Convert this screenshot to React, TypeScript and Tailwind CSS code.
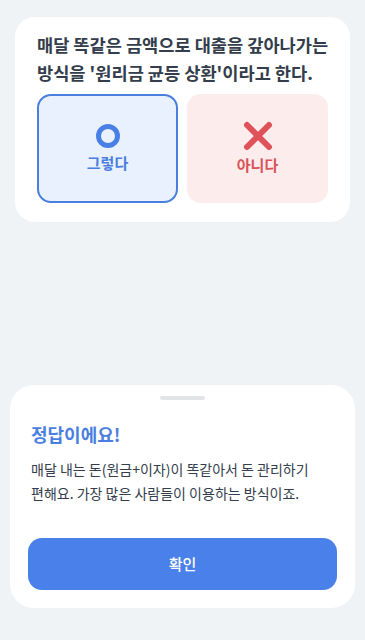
export default function App() {
  return (
    <div
      className="min-h-[640px] bg-[#f0f3f5] flex flex-col justify-between pt-[17px] pb-[32px]"
      style={{ fontFamily: '"Noto Sans CJK KR", "Noto Sans", sans-serif' }}
    >
      {/* Question card */}
      <div className="mx-[15px] bg-white rounded-[20px] px-[22px] pt-[14px] pb-[19px]">
        <p className="text-[17.6px] font-bold leading-[28px] text-[#333d4b] whitespace-nowrap">
          매달 똑같은 금액으로 대출을 갚아나가는
          <br />
          방식을 '원리금 균등 상환'이라고 한다.
        </p>
        <div className="mt-[7px] grid grid-cols-2 gap-[9px]">
          <button className="h-[109px] rounded-[14px] border-2 border-[#4a7fe0] bg-[#e8f1fd] flex flex-col items-center justify-center gap-[3px]">
            <svg width="26" height="26" viewBox="0 0 26 26">
              <circle cx="13" cy="13" r="9.5" fill="none" stroke="#4a80e6" strokeWidth="5" />
            </svg>
            <span className="text-[15px] font-bold text-[#4a7ee0] leading-[22px]">그렇다</span>
          </button>
          <button className="h-[109px] rounded-[14px] bg-[#fdecec] flex flex-col items-center justify-center gap-[3px]">
            <svg width="30" height="30" viewBox="0 0 30 30">
              <path d="M4 4 L26 26 M26 4 L4 26" stroke="#df525a" strokeWidth="6" strokeLinecap="round" />
            </svg>
            <span className="text-[15px] font-bold text-[#d9535b] leading-[22px]">아니다</span>
          </button>
        </div>
      </div>

      {/* Result sheet */}
      <div className="mx-[10px] bg-white rounded-[24px] px-[18px] pt-[11px] pb-[18px]">
        <div className="mx-auto w-[45px] h-[4px] rounded-full bg-[#e2e4e7]" />
        <h2 className="mt-[21px] ml-[3px] text-[18px] font-bold text-[#4a7ee0] leading-[26px]">
          정답이에요!
        </h2>
        <p className="mt-[10px] ml-[3px] text-[14px] leading-[24px] text-[#333d4b]">
          매달 내는 돈(원금+이자)이 똑같아서 돈 관리하기
          <br />
          편해요. 가장 많은 사람들이 이용하는 방식이죠.
        </p>
        <button className="mt-[33px] w-full h-[52px] rounded-[14px] bg-[#4a80ea] text-white text-[15px] font-medium">
          확인
        </button>
      </div>
    </div>
  );
}
